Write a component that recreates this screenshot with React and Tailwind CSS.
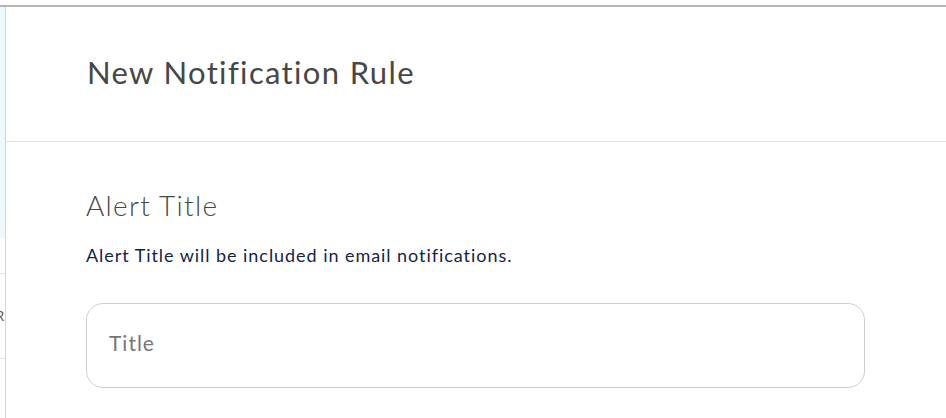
import React from 'react';

const font = { fontFamily: 'Lato, "Noto Sans", sans-serif' };

const SideStrip = () => (
  <div className="w-[6px] shrink-0 flex flex-col border-r border-[#d6d6d6]">
    <div className="h-[231px] bg-[#eef7fb]" />
    <div className="h-[36px] border-b border-[#e2e2e2]" />
    <div className="h-[85px] border-b border-[#e2e2e2] flex items-center overflow-hidden">
      <span className="text-[13px] text-[#555] -ml-[4px] leading-none">R</span>
    </div>
    <div className="flex-1" />
  </div>
);

const App = () => {
  return (
    <div className="w-[946px] h-[418px] bg-white overflow-hidden flex flex-col" style={font}>
      <div className="h-[5px] bg-white" />
      <div className="h-[2px] bg-[#b5b5b5] shadow-[0_1px_2px_rgba(0,0,0,0.25)]" />
      <div className="flex flex-1 min-h-0">
        <SideStrip />
        <div className="flex-1 flex flex-col bg-white">
          <div className="h-[135px] border-b border-[#e3e3e3] flex items-center pl-[81px] pb-[3px]">
            <h1 className="text-[31px] text-[#474747] leading-none tracking-[1.35px]">New Notification Rule</h1>
          </div>
          <div className="pl-[80px] pr-[80px] pt-[49px]">
            <h2 className="text-[28px] font-light text-[#474747] leading-none tracking-[1.3px]">Alert Title</h2>
            <p className="mt-[27px] text-[18px] text-[#132447] leading-none tracking-[0.95px]">
              Alert Title will be included in email notifications.
            </p>
            <div className="mt-[39px] w-[779px] h-[85px] rounded-[17px] border border-[#cfcfcf] flex items-center px-[22px] pb-[6px]">
              <span className="text-[21px] text-[#777777] leading-none tracking-[1px]">Title</span>
            </div>
          </div>
        </div>
      </div>
    </div>
  );
};

export default App;
